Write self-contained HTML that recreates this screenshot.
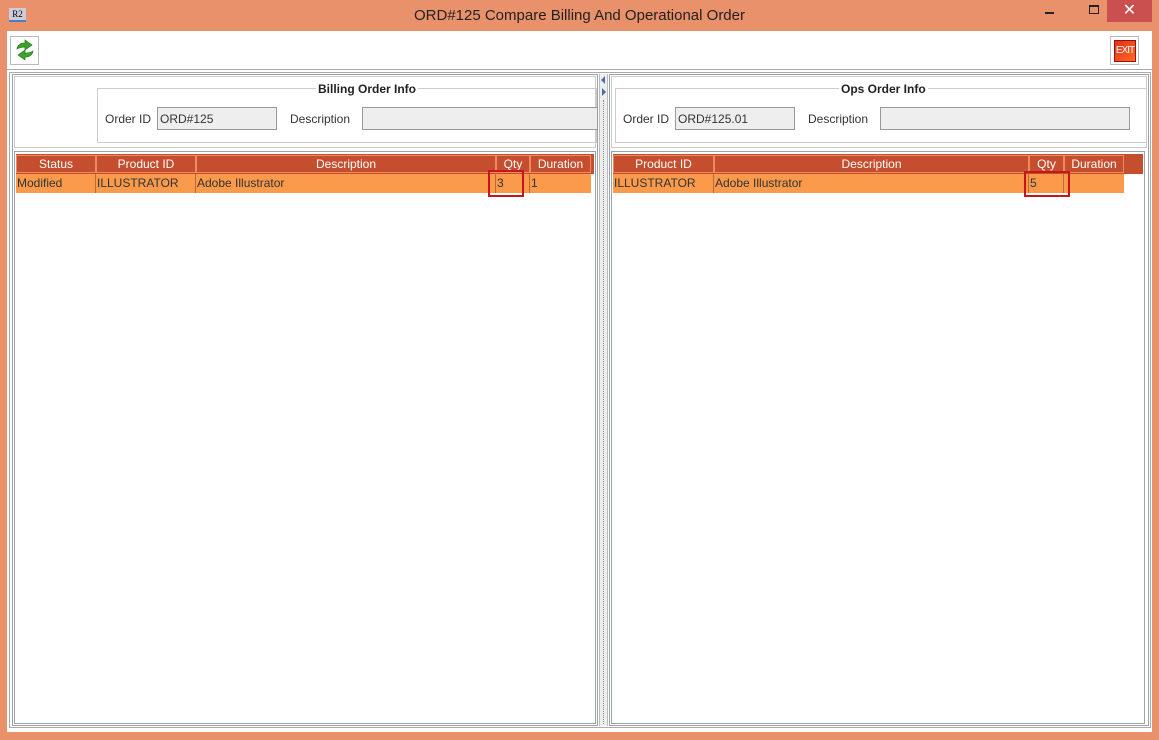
<!DOCTYPE html>
<html><head><style>
*{margin:0;padding:0;box-sizing:border-box}
body{width:1159px;height:740px;background:#E9916A;position:relative;overflow:hidden;font-family:"Liberation Sans",Arial,sans-serif;font-size:12px;color:#333}
.a{position:absolute}
.title{left:0;right:0;top:7px;text-align:center;font-size:15px;color:#222}
.client{left:7px;top:31px;width:1145px;height:701px;background:#fff}
.box{border:1px solid #9aa3ab}
.fld{background:#eee;border:1px solid #999;height:23px;padding:4px 2px;font-size:12px;color:#333}
.hdr{background:#C44E2E;height:20px}
.hc{position:absolute;top:155px;height:18px;border:1px solid #EF8A60;color:#fff;text-align:center;line-height:16px;font-size:12px}
.rc{position:absolute;top:0;height:19px;border-right:1px solid #c06a30;line-height:19px;padding-left:1px;font-size:12px;color:#333}
.red{border:2px solid #C4161C}
.gb{border:1px solid #ccc}
.gt{background:#fff;font-weight:bold;font-size:12px;color:#222;padding:0 2px}
</style></head><body>
<div class="a" style="left:9px;top:8px;width:17px;height:14px;background:#ccd;border-bottom:2px solid #4a7fc0;font-size:9px;font-family:'Liberation Serif',serif;color:#000;text-align:center;line-height:12px">R2</div>
<div class="a title">ORD#125 Compare Billing And Operational Order</div>
<div class="a" style="left:1045px;top:12px;width:9px;height:2px;background:#222"></div>
<div class="a" style="left:1089px;top:5px;width:10px;height:9px;border:1px solid #222;border-top-width:2px"></div>
<div class="a" style="left:1107px;top:0;width:45px;height:22px;background:#C9504F;color:#fff;text-align:center;font-size:16px;line-height:22px">✕</div>
<div class="a client"></div>
<div class="a" style="left:10px;top:36px;width:29px;height:29px;border:1px solid #bbb"></div>
<svg class="a" style="left:14px;top:39px" width="22" height="22" viewBox="0 0 22 22"><path d="M3 10 Q4 4 11 4 L11 1 L18 6 L11 11 L11 8 Q6 8 3 10Z" fill="#3aa32a" stroke="#1f7a1a" stroke-width=".7"/><path d="M19 12 Q18 18 11 18 L11 21 L4 16 L11 11 L11 14 Q16 14 19 12Z" fill="#3aa32a" stroke="#1f7a1a" stroke-width=".7"/></svg>
<div class="a" style="left:1110px;top:36px;width:29px;height:29px;border:1px solid #bbb"></div>
<div class="a" style="left:1114px;top:40px;width:22px;height:22px;background:linear-gradient(135deg,#e0301a,#ff6a20);border:1px solid #9a1010;color:#fff;font-size:10px;line-height:20px;text-align:center;letter-spacing:-1px">EXIT</div>
<div class="a" style="left:7px;top:69px;width:1145px;height:1px;background:#aaa"></div>
<div class="a" style="left:9px;top:72px;width:1142px;height:656px;border:1px solid #aaa"></div>
<div class="a box" style="left:12px;top:74px;width:586px;height:652px"></div>
<div class="a box" style="left:14px;top:76px;width:582px;height:72px;border-color:#ccc"></div>
<div class="a gb" style="left:97px;top:88px;width:500px;height:55px"></div>
<div class="a gt" style="left:316px;top:82px">Billing Order Info</div>
<div class="a" style="left:105px;top:112px">Order ID</div>
<div class="a fld" style="left:157px;top:107px;width:120px">ORD#125</div>
<div class="a" style="left:290px;top:112px">Description</div>
<div class="a fld" style="left:362px;top:107px;width:236px"></div>
<div class="a box" style="left:14px;top:151px;width:582px;height:573px"></div>
<div class="a hdr" style="left:16px;top:154px;width:578px"></div>
<div class="a hc" style="left:16px;width:80px">Status</div>
<div class="a hc" style="left:96px;width:100px">Product ID</div>
<div class="a hc" style="left:196px;width:300px">Description</div>
<div class="a hc" style="left:496px;width:34px">Qty</div>
<div class="a hc" style="left:530px;width:61px">Duration</div>
<div class="a" style="left:16px;top:174px;width:575px;height:19px;background:#FA9A4A">
<div class="rc" style="left:0;width:80px">Modified</div>
<div class="rc" style="left:80px;width:100px">ILLUSTRATOR</div>
<div class="rc" style="left:180px;width:300px">Adobe Illustrator</div>
<div class="rc" style="left:480px;width:34px">3</div>
<div class="rc" style="left:514px;width:61px;border:0">1</div></div>
<div class="a red" style="left:488px;top:170px;width:36px;height:27px"></div>
<div class="a" style="left:599px;top:74px;width:9px;height:652px;background:#eee;border-left:1px solid #bbb;border-right:1px solid #bbb"></div>
<div class="a" style="left:603px;top:100px;width:1px;height:624px;border-left:1px dotted #888"></div>
<div class="a" style="left:601px;top:76px;width:0;height:0;border:4px solid transparent;border-right-color:#4a6fa0;border-left:0"></div>
<div class="a" style="left:602px;top:88px;width:0;height:0;border:4px solid transparent;border-left-color:#4a6fa0;border-right:0"></div>
<div class="a box" style="left:609px;top:74px;width:540px;height:652px"></div>
<div class="a box" style="left:611px;top:76px;width:536px;height:72px;border-color:#ccc"></div>
<div class="a gb" style="left:615px;top:88px;width:532px;height:55px"></div>
<div class="a gt" style="left:839px;top:82px">Ops Order Info</div>
<div class="a" style="left:623px;top:112px">Order ID</div>
<div class="a fld" style="left:675px;top:107px;width:120px">ORD#125.01</div>
<div class="a" style="left:808px;top:112px">Description</div>
<div class="a fld" style="left:880px;top:107px;width:250px"></div>
<div class="a box" style="left:611px;top:151px;width:534px;height:573px"></div>
<div class="a hdr" style="left:613px;top:154px;width:530px"></div>
<div class="a hc" style="left:613px;width:101px">Product ID</div>
<div class="a hc" style="left:714px;width:315px">Description</div>
<div class="a hc" style="left:1029px;width:35px">Qty</div>
<div class="a hc" style="left:1064px;width:60px">Duration</div>
<div class="a" style="left:613px;top:174px;width:511px;height:19px;background:#FA9A4A">
<div class="rc" style="left:0;width:101px">ILLUSTRATOR</div>
<div class="rc" style="left:101px;width:315px">Adobe Illustrator</div>
<div class="rc" style="left:416px;width:35px">5</div></div>
<div class="a red" style="left:1024px;top:171px;width:46px;height:26px"></div>
</body></html>
